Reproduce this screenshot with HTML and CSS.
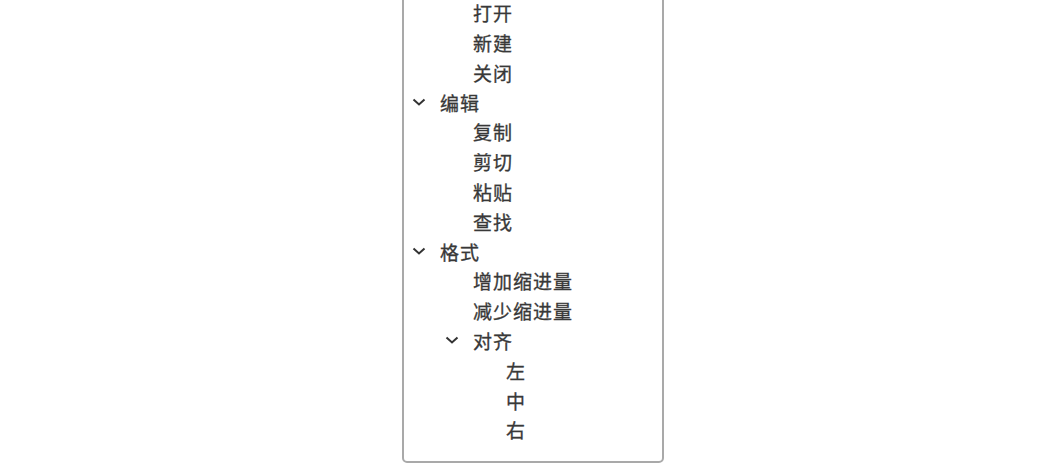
FILE: index.html
```html
<!DOCTYPE html>
<html lang="zh">
<head>
<meta charset="utf-8">
<link rel="stylesheet" href="styles.css">
</head>
<body>
<div class="page">
  <div class="tree">
    <div class="node l1"><span class="sw"><svg viewBox="0 0 14 8" width="14" height="8"><polyline points="1.5,1.5 7,6.5 12.5,1.5"/></svg></span><span class="t">文件</span></div>
    <div class="node l2"><span class="sw"></span><span class="t">打开</span></div>
    <div class="node l2"><span class="sw"></span><span class="t">新建</span></div>
    <div class="node l2"><span class="sw"></span><span class="t">关闭</span></div>
    <div class="node l1"><span class="sw"><svg viewBox="0 0 14 8" width="14" height="8"><polyline points="1.5,1.5 7,6.5 12.5,1.5"/></svg></span><span class="t">编辑</span></div>
    <div class="node l2"><span class="sw"></span><span class="t">复制</span></div>
    <div class="node l2"><span class="sw"></span><span class="t">剪切</span></div>
    <div class="node l2"><span class="sw"></span><span class="t">粘贴</span></div>
    <div class="node l2"><span class="sw"></span><span class="t">查找</span></div>
    <div class="node l1"><span class="sw"><svg viewBox="0 0 14 8" width="14" height="8"><polyline points="1.5,1.5 7,6.5 12.5,1.5"/></svg></span><span class="t">格式</span></div>
    <div class="node l2"><span class="sw"></span><span class="t">增加缩进量</span></div>
    <div class="node l2"><span class="sw"></span><span class="t">减少缩进量</span></div>
    <div class="node l2"><span class="sw"><svg viewBox="0 0 14 8" width="14" height="8"><polyline points="1.5,1.5 7,6.5 12.5,1.5"/></svg></span><span class="t">对齐</span></div>
    <div class="node l3"><span class="sw"></span><span class="t">左</span></div>
    <div class="node l3"><span class="sw"></span><span class="t">中</span></div>
    <div class="node l3"><span class="sw"></span><span class="t">右</span></div>
  </div>
</div>
</body>
</html>
```

FILE: styles.css
```css
html, body {
  margin: 0;
  padding: 0;
  background: #fff;
}
.page {
  display: flex;
  padding-left: 402px;
}
.tree {
  width: 262px;
  margin-top: -38px;
  height: 501px;
  box-sizing: border-box;
  padding: 4px 0 0 8px;
  border: 2px solid #a9a9a9;
  border-radius: 5px;
  display: flex;
  flex-direction: column;
  font-family: "Noto Sans CJK SC", sans-serif;
  font-size: 19px;
  color: #383838;
}
.node {
  height: 29.8px;
  display: flex;
  align-items: center;
}
.sw {
  width: 28px;
  flex: none;
  display: flex;
  align-items: center;
}
.sw svg {
  fill: none;
  stroke: #333;
  stroke-width: 2;
}
.l2 { padding-left: 33px; }
.l3 { padding-left: 66px; }
.t {
  white-space: nowrap;
  letter-spacing: 1px;
  -webkit-text-stroke: 0.3px #383838;
}
```
